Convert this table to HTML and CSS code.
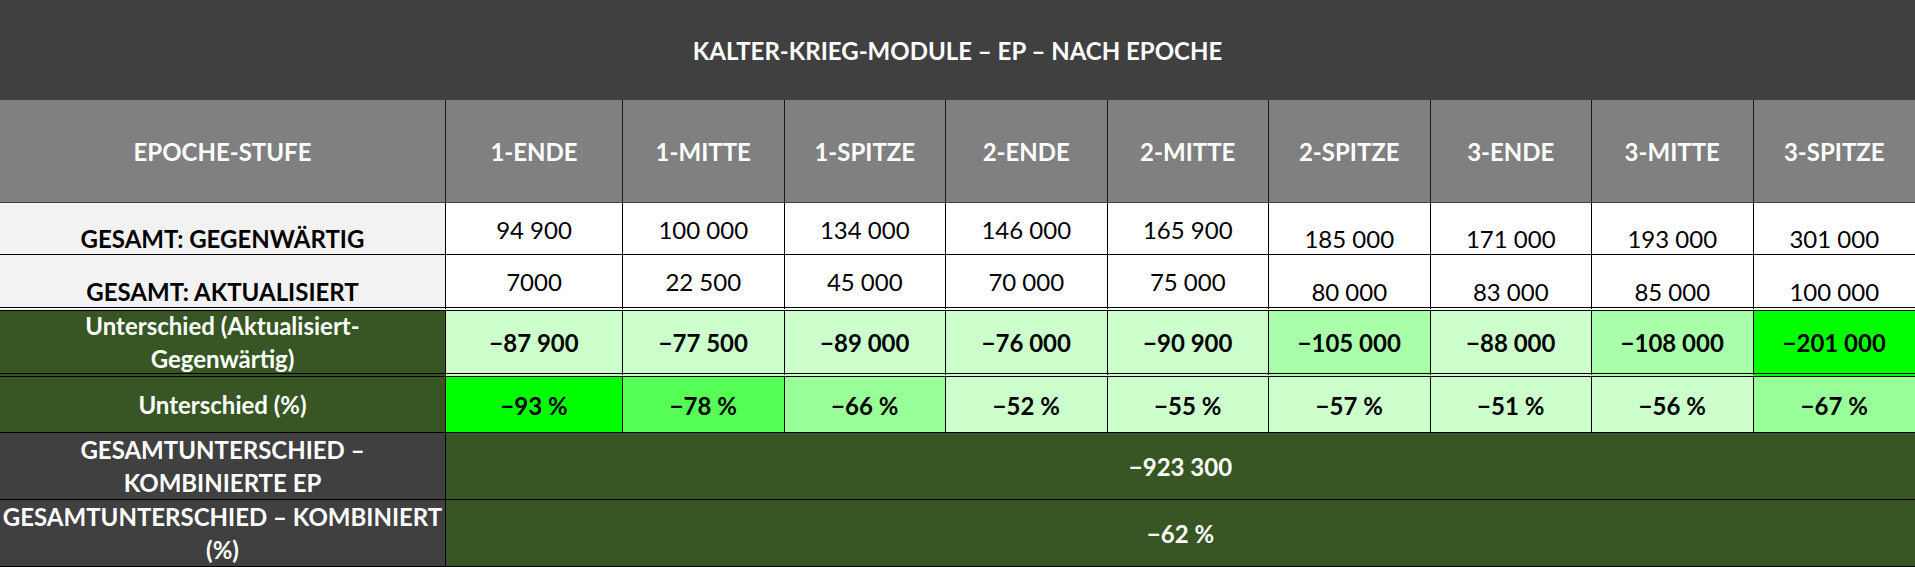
FILE: index.html
```html
<!DOCTYPE html>
<html lang="de">
<head>
<meta charset="utf-8">
<title>Kalter-Krieg-Module – EP – nach Epoche</title>
<link rel="stylesheet" href="styles.css">
</head>
<body>
<div class="sheet">
  <div class="c title">KALTER-KRIEG-MODULE – EP – NACH EPOCHE</div>

  <div class="c head">EPOCHE-STUFE</div>
  <div class="c head">1-ENDE</div>
  <div class="c head">1-MITTE</div>
  <div class="c head">1-SPITZE</div>
  <div class="c head">2-ENDE</div>
  <div class="c head">2-MITTE</div>
  <div class="c head">2-SPITZE</div>
  <div class="c head">3-ENDE</div>
  <div class="c head">3-MITTE</div>
  <div class="c head last">3-SPITZE</div>

  <div class="c lab light bot">GESAMT: GEGENWÄRTIG</div>
  <div class="c val mid">94&nbsp;900</div>
  <div class="c val mid">100&nbsp;000</div>
  <div class="c val mid">134&nbsp;000</div>
  <div class="c val mid">146&nbsp;000</div>
  <div class="c val mid">165&nbsp;900</div>
  <div class="c val bot">185&nbsp;000</div>
  <div class="c val bot">171&nbsp;000</div>
  <div class="c val bot">193&nbsp;000</div>
  <div class="c val bot last">301&nbsp;000</div>

  <div class="c lab light bot dbl">GESAMT: AKTUALISIERT</div>
  <div class="c val mid dbl">7000</div>
  <div class="c val mid dbl">22&nbsp;500</div>
  <div class="c val mid dbl">45&nbsp;000</div>
  <div class="c val mid dbl">70&nbsp;000</div>
  <div class="c val mid dbl">75&nbsp;000</div>
  <div class="c val bot dbl">80&nbsp;000</div>
  <div class="c val bot dbl">83&nbsp;000</div>
  <div class="c val bot dbl">85&nbsp;000</div>
  <div class="c val bot dbl last">100&nbsp;000</div>

  <div class="c lab green dbl">Unterschied (Aktualisiert-<br>Gegenwärtig)</div>
  <div class="c diff g1 dbl">−87&nbsp;900</div>
  <div class="c diff g1 dbl">−77&nbsp;500</div>
  <div class="c diff g1 dbl">−89&nbsp;000</div>
  <div class="c diff g1 dbl">−76&nbsp;000</div>
  <div class="c diff g1 dbl">−90&nbsp;900</div>
  <div class="c diff g2 dbl">−105&nbsp;000</div>
  <div class="c diff g1 dbl">−88&nbsp;000</div>
  <div class="c diff g2 dbl">−108&nbsp;000</div>
  <div class="c diff g5 dbl last">−201&nbsp;000</div>

  <div class="c lab green">Unterschied (%)</div>
  <div class="c diff g5">−93&nbsp;%</div>
  <div class="c diff g4">−78&nbsp;%</div>
  <div class="c diff g3">−66&nbsp;%</div>
  <div class="c diff g1">−52&nbsp;%</div>
  <div class="c diff g1">−55&nbsp;%</div>
  <div class="c diff g1">−57&nbsp;%</div>
  <div class="c diff g1">−51&nbsp;%</div>
  <div class="c diff g1">−56&nbsp;%</div>
  <div class="c diff g3 last">−67&nbsp;%</div>

  <div class="c lab dark">GESAMTUNTERSCHIED –<br>KOMBINIERTE EP</div>
  <div class="c total span">−923&nbsp;300</div>

  <div class="c lab dark">GESAMTUNTERSCHIED – KOMBINIERT<br>(%)</div>
  <div class="c total span">−62&nbsp;%</div>
</div>
</body>
</html>
```

FILE: styles.css
```css
html, body {
  margin: 0;
  padding: 0;
  background: #ffffff;
}

.sheet {
  display: grid;
  grid-template-columns: 446px 177px repeat(8, 161.5px);
  grid-template-rows: 100px 103px 52px 56px 66px 56px 67px 67px;
  width: 1915px;
  font-family: Lato, "Open Sans", sans-serif;
  font-size: 24px;
  color: #000000;
}

.c {
  box-sizing: border-box;
  display: flex;
  justify-content: center;
  align-items: center;
  text-align: center;
  white-space: nowrap;
  border-right: 1px solid #000000;
  border-bottom: 1px solid #000000;
  line-height: 1.2;
}

.c.last {
  border-right: none;
}

.title {
  grid-column: 1 / -1;
  background: #404040;
  color: #ffffff;
  font-weight: 700;
  border: none;
  padding-top: 2px;
}

.head {
  background: #808080;
  color: #ffffff;
  font-weight: 700;
  border-right-color: #1a1a1a;
  border-bottom-color: #404040;
  padding-top: 3px;
}

.lab {
  font-weight: 700;
  line-height: 33px;
}

.light {
  background: #f2f2f2;
  color: #000000;
}

.green {
  background: #375623;
  color: #ffffff;
}

.dark {
  background: #404040;
  color: #ffffff;
}

.val {
  background: #ffffff;
  font-weight: 400;
}

.mid {
  align-items: center;
  padding-top: 3px;
}

.bot {
  align-items: flex-end;
}

.lab.bot {
  line-height: 1.2;
}

.dbl {
  border-bottom: 4px double #000000;
}

.diff {
  font-weight: 700;
  padding-top: 3px;
}

.g1 { background: #ccffcc; }
.g2 { background: #aaffaa; }
.g3 { background: #99ff99; }
.g4 { background: #55ff55; }
.g5 { background: #00ff00; }

.total {
  background: #375623;
  color: #ffffff;
  font-weight: 700;
  border-right: none;
  padding-top: 3px;
}

.span {
  grid-column: 2 / -1;
}
```
